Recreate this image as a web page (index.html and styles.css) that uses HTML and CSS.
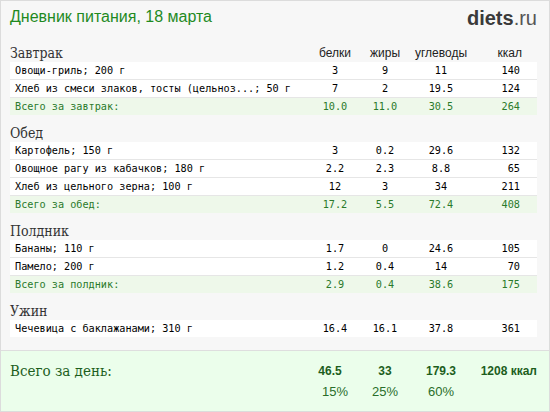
FILE: index.html
```html
<!DOCTYPE html>
<html lang="ru">
<head>
<meta charset="utf-8">
<title>Дневник питания</title>
<link rel="stylesheet" href="styles.css">
</head>
<body>
<div class="page">
  <header class="top">
    <h1 class="title">Дневник питания, 18 марта</h1>
    <div class="logo"><b>diets</b>.ru</div>
  </header>

  <section class="meal">
    <div class="head">
      <span class="meal-name">Завтрак</span>
      <span class="col">белки</span>
      <span class="col">жиры</span>
      <span class="col">углеводы</span>
      <span class="col kcal">ккал</span>
    </div>
    <div class="rows">
      <div class="row"><span class="name">Овощи-гриль; 200 г</span><span class="num">3</span><span class="num">9</span><span class="num">11</span><span class="num kcal">140</span></div>
      <div class="row"><span class="name">Хлеб из смеси злаков, тосты (цельноз...; 50 г</span><span class="num">7</span><span class="num">2</span><span class="num">19.5</span><span class="num kcal">124</span></div>
      <div class="row total"><span class="name">Всего за завтрак:</span><span class="num">10.0</span><span class="num">11.0</span><span class="num">30.5</span><span class="num kcal">264</span></div>
    </div>
  </section>

  <section class="meal">
    <div class="head"><span class="meal-name">Обед</span></div>
    <div class="rows">
      <div class="row"><span class="name">Картофель; 150 г</span><span class="num">3</span><span class="num">0.2</span><span class="num">29.6</span><span class="num kcal">132</span></div>
      <div class="row"><span class="name">Овощное рагу из кабачков; 180 г</span><span class="num">2.2</span><span class="num">2.3</span><span class="num">8.8</span><span class="num kcal">65</span></div>
      <div class="row"><span class="name">Хлеб из цельного зерна; 100 г</span><span class="num">12</span><span class="num">3</span><span class="num">34</span><span class="num kcal">211</span></div>
      <div class="row total"><span class="name">Всего за обед:</span><span class="num">17.2</span><span class="num">5.5</span><span class="num">72.4</span><span class="num kcal">408</span></div>
    </div>
  </section>

  <section class="meal">
    <div class="head"><span class="meal-name">Полдник</span></div>
    <div class="rows">
      <div class="row"><span class="name">Бананы; 110 г</span><span class="num">1.7</span><span class="num">0</span><span class="num">24.6</span><span class="num kcal">105</span></div>
      <div class="row"><span class="name">Памело; 200 г</span><span class="num">1.2</span><span class="num">0.4</span><span class="num">14</span><span class="num kcal">70</span></div>
      <div class="row total"><span class="name">Всего за полдник:</span><span class="num">2.9</span><span class="num">0.4</span><span class="num">38.6</span><span class="num kcal">175</span></div>
    </div>
  </section>

  <section class="meal">
    <div class="head"><span class="meal-name">Ужин</span></div>
    <div class="rows">
      <div class="row"><span class="name">Чечевица с баклажанами; 310 г</span><span class="num">16.4</span><span class="num">16.1</span><span class="num">37.8</span><span class="num kcal">361</span></div>
    </div>
  </section>

  <footer class="day">
    <div class="day-line">
      <span class="day-name">Всего за день:</span>
      <span class="big first">46.5</span>
      <span class="big">33</span>
      <span class="big">179.3</span>
      <span class="big kcal">1208 ккал</span>
    </div>
    <div class="day-line pct">
      <span></span>
      <span>15%</span>
      <span>25%</span>
      <span>60%</span>
      <span></span>
    </div>
  </footer>
</div>
</body>
</html>
```

FILE: styles.css
```css
* { box-sizing: border-box; }
html, body { margin: 0; padding: 0; }
body { width: 550px; height: 412px; overflow: hidden; }

.page {
  width: 550px;
  height: 412px;
  border: 1px solid #dcdcdc;
  background: #f7f7f7;
  display: flex;
  flex-direction: column;
}

.top {
  display: flex;
  justify-content: space-between;
  align-items: flex-start;
  padding: 5px 12px 0 9px;
  height: 42px;
}
.title {
  margin: 0;
  font-family: "Liberation Sans", Arial, sans-serif;
  font-weight: normal;
  font-size: 16px;
  line-height: 21px;
  color: #1f8a1f;
}
.logo {
  font-family: "Liberation Sans", Arial, sans-serif;
  font-size: 20px;
  line-height: 22px;
  color: #555;
  margin-top: 1px;
}
.logo b { color: #3a3a3a; }

.meal { padding: 0 12px 0 9px; margin-bottom: 8px; }

.head, .row, .day-line {
  display: grid;
  grid-template-columns: 1fr 50px 50px 62px 65px;
  align-items: center;
}
.head { height: 19px; }
.meal-name {
  font-family: "DejaVu Serif Condensed", "DejaVu Serif", serif;
  font-stretch: condensed;
  font-size: 14px;
  color: #333;
}
.col {
  font-family: "Liberation Sans", Arial, sans-serif;
  font-size: 12px;
  color: #222;
  text-align: center;
}
.head .kcal { text-align: right; padding-right: 15px; }

.rows { display: flex; flex-direction: column; gap: 1px; background: #e6e6e6; }
.row {
  height: 17px;
  background: #fff;
  font-family: "DejaVu Sans Mono", monospace;
  font-size: 10.2px;
  color: #000;
}
.row .name { padding-left: 5px; white-space: nowrap; overflow: hidden; }
.num { text-align: center; }
.row .kcal { text-align: right; padding-right: 17px; }
.row.total { background: #eef8ea; color: #2a7a2a; }

.day {
  margin-top: auto;
  border-top: 1px solid #dedede;
  background: #ebfeeb;
  height: 61px;
  padding: 9px 12px 0 9px;
  color: #1d5e1d;
}
.day-line { height: 21px; }
.day-name {
  font-family: "DejaVu Serif Condensed", "DejaVu Serif", serif;
  font-stretch: condensed;
  font-size: 15px;
}
.big {
  font-family: "Liberation Sans", Arial, sans-serif;
  font-weight: bold;
  font-size: 12px;
  text-align: center;
}
.big.first { padding-right: 10px; }
.big.kcal { text-align: right; white-space: nowrap; }
.pct span {
  font-family: "Liberation Sans", Arial, sans-serif;
  font-size: 13px;
  text-align: center;
  color: #2a6e2a;
}
```
